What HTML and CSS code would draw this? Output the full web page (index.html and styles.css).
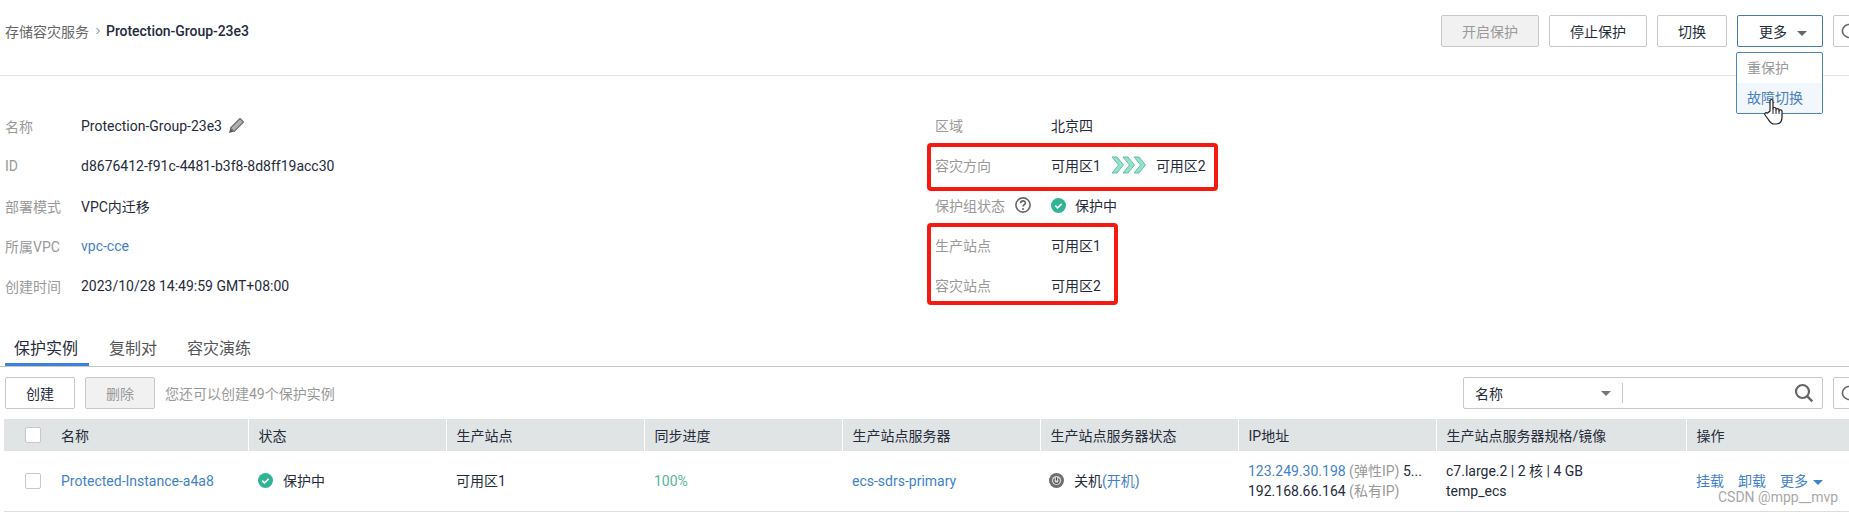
FILE: index.html
```html
<!DOCTYPE html>
<html lang="zh-CN">

<head>
  <meta charset="UTF-8">
  <title>存储容灾服务</title>
  <link rel="stylesheet" href="styles.css">
</head>

<body>
  <div class="page">
    <!-- 顶部 -->
    <div class="header">
      <div class="crumb">
        <span class="crumb-root">存储容灾服务</span>
        <svg class="crumb-sep" width="6" height="8" viewBox="0 0 6 8"><path d="M1.5 1l3 3-3 3" fill="none" stroke="#777" stroke-width="1"/></svg>
        <span class="crumb-now">Protection-Group-23e3</span>
      </div>
      <div class="actions">
        <button class="btn btn-off w98">开启保护</button>
        <button class="btn w98">停止保护</button>
        <button class="btn w70">切换</button>
        <div class="more">
          <button class="btn btn-open w86">更多<i class="caret"></i></button>
          <div class="menu">
            <div class="menu-item off">重保护</div>
            <div class="menu-item on">故障切换</div>
          </div>
          <svg class="hand" width="20" height="28" viewBox="0 0 20 28"><path d="M6 13V3.2c0-2.300 3-2.300 3 0V11c0-2 3-2 3 0v1c0-1.800 3-1.800 3 0v1c0-1.600 3-1.600 3 0v6c0 4-2 7-6 7h-2c-3 0-4-2-6-5l-3-4c-1-1.600 1-3 2.300-1.800z" fill="#fff" stroke="#222" stroke-width="1.200" stroke-linejoin="round"/><path d="M9 11v5M12 12v4M15 13v3" stroke="#222" stroke-width="1"/></svg>
        </div>
        <button class="btn btn-icon"><svg width="18" height="18" viewBox="0 0 18 18"><path d="M15.500 9a6.500 6.500 0 1 1-2-4.700" fill="none" stroke="#666" stroke-width="1.600"/></svg></button>
      </div>
    </div>

    <!-- 基本信息 -->
    <div class="detail">
      <div class="detail-left">
        <div class="row"><span class="label">名称</span><span>Protection-Group-23e3</span>
          <svg class="pen" width="18" height="18" viewBox="0 0 18 18"><path d="M13 1.500l3.500 3.500-9.500 9.500-3.500-3.500z" fill="#b0b0b0" stroke="#6e6e6e" stroke-width="1.100" stroke-linejoin="round"/><path d="M3.300 11.500l3.200 3.200-4.500 1.300z" fill="#555"/></svg>
        </div>
        <div class="row"><span class="label">ID</span><span>d8676412-f91c-4481-b3f8-8d8ff19acc30</span></div>
        <div class="row"><span class="label">部署模式</span><span>VPC内迁移</span></div>
        <div class="row"><span class="label">所属VPC</span><a class="link">vpc-cce</a></div>
        <div class="row"><span class="label">创建时间</span><span>2023/10/28 14:49:59 GMT+08:00</span></div>
      </div>
      <div class="detail-right">
        <div class="row"><span class="label">区域</span><span>北京四</span></div>
        <div class="row"><span class="label">容灾方向</span><span>可用区1</span>
          <svg class="chevrons" width="36" height="18" viewBox="0 0 36 18">
            <path d="M1 1h5l6.500 8-6.500 8H1l6.500-8z" fill="#98e0cb" stroke="#4fbd9f" stroke-width=".9"/>
            <path d="M12 1h5l6.500 8-6.500 8h-5l6.500-8z" fill="#98e0cb" stroke="#4fbd9f" stroke-width=".9"/>
            <path d="M23 1h5l6.500 8-6.500 8h-5l6.500-8z" fill="#98e0cb" stroke="#4fbd9f" stroke-width=".9"/>
          </svg>
          <span>可用区2</span>
        </div>
        <div class="row"><span class="label label-help">保护组状态
            <svg class="help" width="16" height="16" viewBox="0 0 16 16"><circle cx="8" cy="8" r="7.100" fill="none" stroke="#666" stroke-width="1.600"/><path d="M5.700 6.200c0-3.100 4.700-3.100 4.700-.2 0 1.700-2.400 1.700-2.400 3.600" fill="none" stroke="#666" stroke-width="1.600"/><circle cx="8" cy="11.900" r="1" fill="#666"/></svg>
          </span>
          <svg class="check" width="15" height="15" viewBox="0 0 15 15"><circle cx="7.500" cy="7.500" r="7.500" fill="#2fb594"/><path d="M4.200 7.600l2.300 2.200 4.200-4" fill="none" stroke="#fff" stroke-width="1.600"/></svg>
          <span>保护中</span>
        </div>
        <div class="row"><span class="label">生产站点</span><span>可用区1</span></div>
        <div class="row"><span class="label">容灾站点</span><span>可用区2</span></div>
        <div class="mark mark-dir"></div>
        <div class="mark mark-site"></div>
      </div>
    </div>

    <!-- 页签 -->
    <div class="tabs">
      <div class="tab active">保护实例</div>
      <div class="tab">复制对</div>
      <div class="tab">容灾演练</div>
    </div>

    <div class="toolbar">
      <button class="btn w70">创建</button>
      <button class="btn btn-off w70">删除</button>
      <span class="hint">您还可以创建49个保护实例</span>
      <div class="search">
        <span class="search-key">名称</span>
        <i class="caret"></i>
        <i class="search-line"></i>
        <svg class="search-icon" width="20" height="20" viewBox="0 0 20 20"><circle cx="8.500" cy="8.500" r="6.500" fill="none" stroke="#666" stroke-width="2.200"/><path d="M13.300 13.300l5 5" stroke="#666" stroke-width="2.400"/></svg>
      </div>
      <button class="btn btn-icon"><svg width="18" height="18" viewBox="0 0 18 18"><path d="M15.500 9a6.500 6.500 0 1 1-2-4.700" fill="none" stroke="#666" stroke-width="1.600"/></svg></button>
    </div>

    <!-- 保护实例列表 -->
    <table class="list">
      <colgroup>
        <col class="c-name"><col class="c-mid"><col class="c-mid"><col class="c-mid"><col class="c-mid"><col class="c-mid"><col class="c-mid"><col class="c-spec"><col class="c-op">
      </colgroup>
      <thead>
        <tr>
          <th><span class="cell-name"><i class="box"></i>名称</span></th>
          <th>状态</th>
          <th>生产站点</th>
          <th>同步进度</th>
          <th>生产站点服务器</th>
          <th>生产站点服务器状态</th>
          <th>IP地址</th>
          <th>生产站点服务器规格/镜像</th>
          <th>操作</th>
        </tr>
      </thead>
      <tbody>
        <tr>
          <td><span class="cell-name"><i class="box"></i><a class="link">Protected-Instance-a4a8</a></span></td>
          <td><span class="status"><svg class="check" width="15" height="15" viewBox="0 0 15 15"><circle cx="7.500" cy="7.500" r="7.500" fill="#2fb594"/><path d="M4.200 7.600l2.300 2.200 4.200-4" fill="none" stroke="#fff" stroke-width="1.600"/></svg>保护中</span></td>
          <td>可用区1</td>
          <td class="ok">100%</td>
          <td><a class="link">ecs-sdrs-primary</a></td>
          <td><span class="status status-off"><svg class="check" width="15" height="15" viewBox="0 0 15 15"><circle cx="7.500" cy="7.500" r="7.500" fill="#6e6e6e"/><circle cx="7.500" cy="7.500" r="4.600" fill="#d8d8d8"/><path d="M5.700 5.700a2.700 2.700 0 1 0 3.600 0" fill="none" stroke="#444" stroke-width="1.100"/><path d="M7.500 4.300v3.200" stroke="#444" stroke-width="1.100"/></svg>关机<a class="link">(开机)</a></span></td>
          <td>
            <div><a class="link">123.249.30.198</a> <span class="gray">(弹性IP)</span> 5...</div>
            <div>192.168.66.164 <span class="gray">(私有IP)</span></div>
          </td>
          <td>
            <div>c7.large.2 | 2 核 | 4 GB</div>
            <div>temp_ecs</div>
          </td>
          <td class="ops"><a class="link">挂载</a><a class="link">卸载</a><a class="link">更多<i class="caret caret-blue"></i></a></td>
        </tr>
      </tbody>
    </table>

    <div class="watermark">CSDN @mpp__mvp</div>
  </div>
</body>

</html>
```

FILE: styles.css
```css
* {
  margin: 0;
  padding: 0;
  box-sizing: border-box;
}

html,
body {
  height: 514px;
  overflow: hidden;
  background: #fff;
}

body {
  font-family: Roboto, "Noto Sans CJK SC", sans-serif;
  font-size: 14px;
  color: #252b3a;
}

.page {
  position: relative;
  width: 1865px;
  height: 514px;
}

.link {
  color: #3f82c9;
}

.gray {
  color: #999;
}

/* 顶部 */
.header {
  display: flex;
  justify-content: space-between;
  height: 76px;
  padding: 15px 0 0 5px;
  border-bottom: 1px solid #e3e3e3;
}

.crumb {
  display: flex;
  align-items: center;
  height: 32px;
}

.crumb-root {
  color: #666;
}

.crumb-sep {
  margin: 0 5px 0 6px;
}

.crumb-now {
  font-weight: 500;
  color: #252b3a;
  letter-spacing: -.05px;
}

.actions {
  display: flex;
  gap: 10px;
}

.btn {
  height: 32px;
  border: 1px solid #c8c8c8;
  border-radius: 2px;
  background: #fff;
  font: inherit;
  color: #252b3a;
}

.btn-off {
  background: #f1f1f1;
  color: #999;
}

.btn-open {
  padding-left: 6px;
  border-color: #4a78b5;
}

.btn-icon {
  display: flex;
  align-items: center;
  justify-content: center;
  width: 32px;
}

.w98 {
  width: 98px;
}

.w86 {
  width: 86px;
}

.w70 {
  width: 70px;
}

.caret {
  display: inline-block;
  width: 0;
  height: 0;
  border-left: 5px solid transparent;
  border-right: 5px solid transparent;
  border-top: 5px solid #666;
  vertical-align: middle;
}

.btn-open .caret {
  margin-left: 10px;
}

.more {
  position: relative;
}

.menu {
  position: absolute;
  top: 37px;
  left: -1px;
  width: 87px;
  height: 62px;
  border: 1px solid #4a86c5;
  border-radius: 2px;
  background: #fff;
}

.menu-item {
  height: 30px;
  padding-left: 10px;
  line-height: 30px;
}

.menu-item.off {
  color: #999;
}

.menu-item.on {
  background: #f1f7fb;
  color: #4a7fc1;
}

.hand {
  position: absolute;
  top: 83px;
  left: 27px;
}

/* 基本信息 */
.detail {
  display: flex;
  padding: 30px 0 0 5px;
}

.detail-left {
  width: 930px;
}

.detail-right {
  position: relative;
  height: 200px;
  margin-top: -1px;
}

.row {
  display: flex;
  align-items: center;
  height: 40px;
}

.label {
  flex: none;
  width: 76px;
  color: #999;
}

.detail-right .label {
  width: 116px;
}

.label-help {
  display: flex;
  align-items: center;
  gap: 10px;
}

.pen {
  margin-left: 5px;
}

.chevrons {
  margin: 0 9px 0 10px;
}

.check {
  flex: none;
  margin-right: 9px;
}

.mark {
  position: absolute;
  left: -8px;
  border: 4px solid #f5190f;
  border-radius: 4px;
}

.mark-dir {
  top: 38px;
  width: 291px;
  height: 48px;
}

.mark-site {
  top: 118px;
  width: 191px;
  height: 82px;
}

/* 页签 */
.tabs {
  display: flex;
  gap: 10px;
  height: 61px;
  padding: 20px 0 0 5px;
  border-bottom: 1px solid #c4c4c4;
  font-size: 16px;
}

.tab {
  height: 40px;
  padding: 0 10px;
  line-height: 45px;
  color: #555;
}

.tab.active {
  width: 84px;
  padding-left: 9px;
  border-bottom: 3px solid #3d82d8;
  color: #252b3a;
}

.toolbar {
  display: flex;
  align-items: center;
  gap: 10px;
  padding: 10px 0 10px 5px;
}

.hint {
  color: #999;
}

.search {
  display: flex;
  align-items: center;
  width: 360px;
  height: 32px;
  margin-left: auto;
  padding: 0 8px 0 11px;
  border: 1px solid #c8c8c8;
  border-radius: 2px;
}

.search-key {
  width: 126px;
}

.search .caret {
  margin-right: 11px;
  border-top-color: #777;
}

.search-line {
  width: 1px;
  height: 20px;
  background: #c8c8c8;
}

.search-icon {
  margin-left: auto;
}

/* 列表 */
.list {
  width: 1845px;
  margin-left: 4px;
  table-layout: fixed;
  border-collapse: collapse;
}

.c-name {
  width: 244px;
}

.c-mid {
  width: 198px;
}

.c-spec {
  width: 250px;
}

.c-op {
  width: 163px;
}

.list th {
  height: 32px;
  padding-left: 10px;
  border-left: 1px solid #fff;
  background: #e1e4e4;
  font-weight: 400;
  text-align: left;
}

.list th:first-child {
  border-left: 0;
}

.list td {
  height: 60px;
  padding-left: 10px;
  border-bottom: 1px solid #dedede;
  line-height: 20px;
  white-space: nowrap;
}

.cell-name {
  display: flex;
  align-items: center;
  margin-left: 11px;
}

.box {
  flex: none;
  width: 16px;
  height: 16px;
  margin-right: 20px;
  border: 1px solid #c8c8c8;
  border-radius: 2px;
  background: #fff;
}

.status {
  display: flex;
  align-items: center;
}

.list .check {
  margin-right: 10px;
}

.list .status-off {
  margin-left: -1px;
}

.ok {
  color: #55b496;
}

.ops .link {
  margin-right: 14px;
}

.caret-blue {
  margin-left: 5px;
  border-top-color: #3f82c9;
}

.watermark {
  position: absolute;
  top: 488px;
  left: 1718px;
  font-size: 14px;
  line-height: 18px;
  color: #a8a8a8;
}
```
